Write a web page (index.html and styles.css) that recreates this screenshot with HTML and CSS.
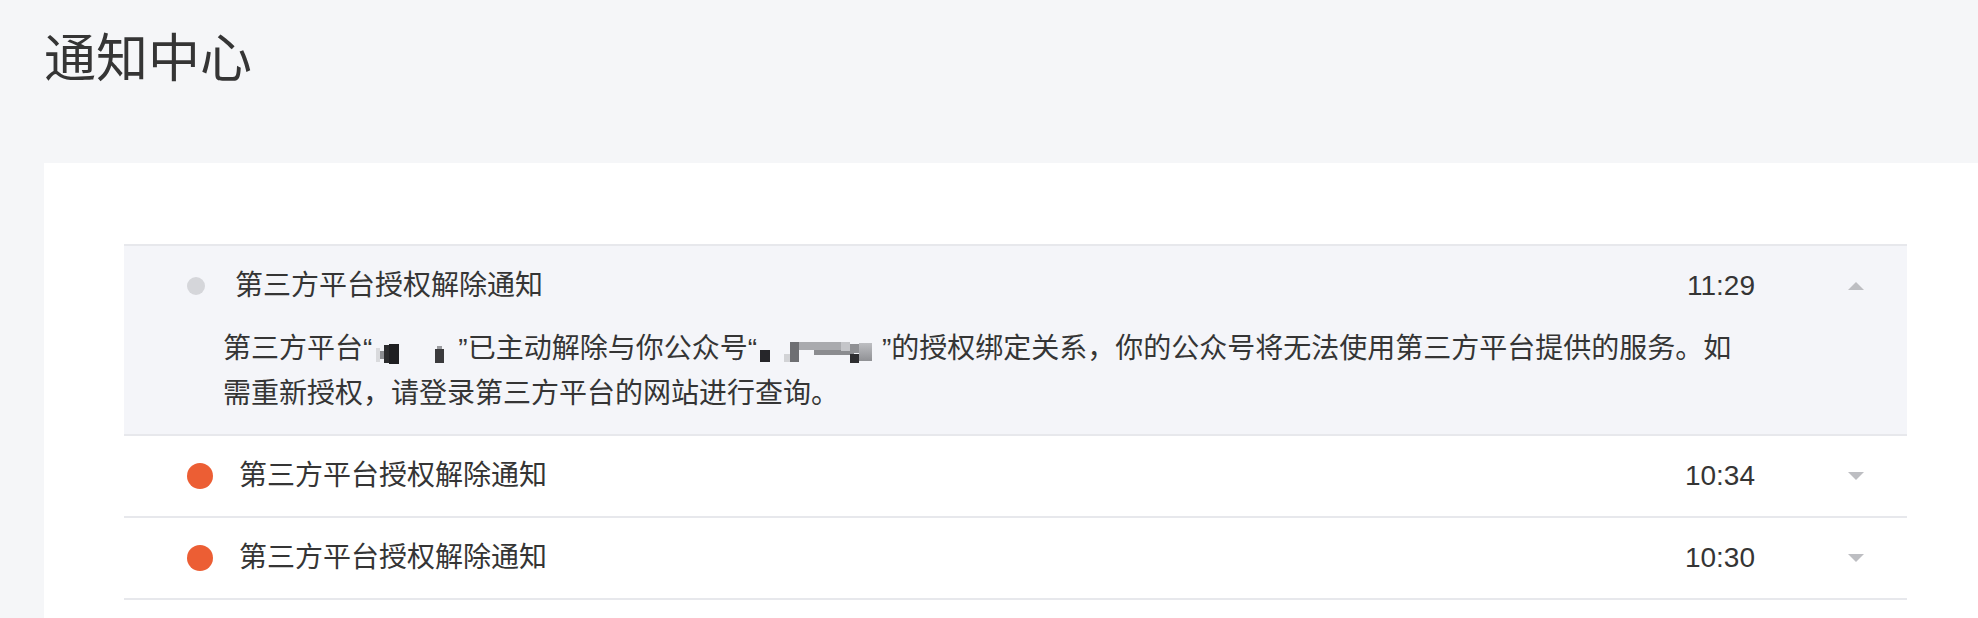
FILE: index.html
```html
<!DOCTYPE html>
<html lang="zh-CN">
<head>
<meta charset="utf-8">
<title>通知中心</title>
<link rel="stylesheet" href="styles.css">
</head>
<body>
<div class="page">
  <h1 class="page-title">通知中心</h1>
  <div class="card">
    <ul class="notice-list">
      <li class="notice is-open">
        <div class="notice-head">
          <span class="dot dot-read"></span>
          <span class="notice-title">第三方平台授权解除通知</span>
          <span class="notice-time">11:29</span>
          <span class="caret caret-up"></span>
        </div>
        <p class="notice-body">第三方平台“<span class="mosaic mosaic-a"><i class="px px-faint"></i><i class="px px-mid"></i><i class="px px-black"></i><i class="px px-gap"></i><i class="px px-dark"></i></span>”已主动解除与你公众号“<span class="mosaic mosaic-b"><i class="px px-black-s"></i><i class="px px-gap-s"></i><i class="px px-light"></i><i class="px px-darkgray"></i><i class="px px-bar"></i><i class="px px-light2"></i><i class="px px-dark2"></i><i class="px px-mid2"></i></span>”的授权绑定关系，你的公众号将无法使用第三方平台提供的服务。如需重新授权，请登录第三方平台的网站进行查询。</p>
      </li>
      <li class="notice">
        <div class="notice-head">
          <span class="dot dot-unread"></span>
          <span class="notice-title">第三方平台授权解除通知</span>
          <span class="notice-time">10:34</span>
          <span class="caret caret-down"></span>
        </div>
      </li>
      <li class="notice">
        <div class="notice-head">
          <span class="dot dot-unread"></span>
          <span class="notice-title">第三方平台授权解除通知</span>
          <span class="notice-time">10:30</span>
          <span class="caret caret-down"></span>
        </div>
      </li>
    </ul>
  </div>
</div>
</body>
</html>
```

FILE: styles.css
```css
html, body {
  margin: 0;
  padding: 0;
}

body {
  background: #f5f6f8;
  font-family: "Liberation Sans", "Noto Sans CJK SC", sans-serif;
  color: #353535;
  overflow: hidden;
}

.page {
  padding: 33px 0 0 44px;
}

.page-title {
  margin: 0;
  font-size: 52px;
  line-height: 52px;
  font-weight: 400;
  color: #353535;
}

.card {
  margin-top: 78px;
  background: #ffffff;
  padding: 81px 0 60px 80px;
  min-height: 500px;
}

.notice-list {
  width: 1783px;
  list-style: none;
  margin: 0;
  padding: 0;
  border-top: 2px solid #e7e8ec;
}

.notice {
  border-bottom: 2px solid #e7e8ec;
}

.notice.is-open {
  background: #f4f5f9;
}

.notice-head {
  display: flex;
  align-items: center;
  height: 80px;
  padding: 0 43px 0 63px;
}

.dot {
  flex: none;
  border-radius: 50%;
}

.dot-read {
  width: 18px;
  height: 18px;
  background: #d5d6da;
  margin-right: 30px;
}

.dot-unread {
  width: 26px;
  height: 26px;
  background: #ec5e34;
  margin-right: 26px;
}

.notice-title {
  flex: 1;
  font-size: 28px;
  line-height: 40px;
}

.notice-time {
  font-size: 28px;
  line-height: 40px;
}

.caret {
  flex: none;
  width: 0;
  height: 0;
  margin-left: 93px;
  border-left: 8px solid transparent;
  border-right: 8px solid transparent;
}

.caret-up {
  border-bottom: 8px solid #bdbec2;
}

.caret-down {
  border-top: 8px solid #bdbec2;
}

.notice-body {
  margin: 0;
  padding: 0 160px 18px 99px;
  font-size: 28px;
  line-height: 45px;
}

.mosaic {
  display: inline-flex;
  align-items: flex-start;
  height: 24px;
  vertical-align: -4px;
}

.mosaic-a {
  width: 86px;
}

.mosaic-b {
  width: 125px;
}

.px {
  display: block;
  flex: none;
}

.px-faint {
  width: 4px;
  height: 14px;
  margin-top: 6px;
  margin-left: 4px;
  background: #d9dadd;
}

.px-mid {
  width: 9px;
  height: 8px;
  margin-top: 9px;
  background: #8d8e92;
}

.px-black {
  width: 10px;
  height: 20px;
  margin-top: 2px;
  background: #1f1f22;
  box-shadow: -6px 0 0 -1px #2c2c2e;
}

.px-gap {
  width: 36px;
  height: 1px;
}

.px-dark {
  width: 9px;
  height: 14px;
  margin-top: 7px;
  background: #3a3a3d;
  box-shadow: 0 -5px 0 -2px #9a9b9f;
}

.px-black-s {
  width: 10px;
  height: 12px;
  margin-top: 10px;
  margin-left: 3px;
  background: #26262a;
}

.px-gap-s {
  width: 14px;
  height: 1px;
}

.px-light {
  width: 6px;
  height: 8px;
  margin-top: 14px;
  background: #d2d3d6;
}

.px-darkgray {
  width: 9px;
  height: 20px;
  margin-top: 2px;
  background: #6e6f73;
}

.px-bar {
  width: 42px;
  height: 8px;
  margin-top: 2px;
  background: #a9aaae;
  box-shadow: 14px 6px 0 -1px #8b8c90;
}

.px-light2 {
  width: 9px;
  height: 9px;
  margin-top: 2px;
  background: #c4c5c9;
}

.px-dark2 {
  width: 9px;
  height: 9px;
  margin-top: 14px;
  background: #2e2e31;
  box-shadow: 0 -10px 0 0 #8f9094;
}

.px-mid2 {
  width: 13px;
  height: 18px;
  margin-top: 3px;
  background: linear-gradient(#b4b5b9, #7e7f83);
  opacity: 0.85;
}
```
